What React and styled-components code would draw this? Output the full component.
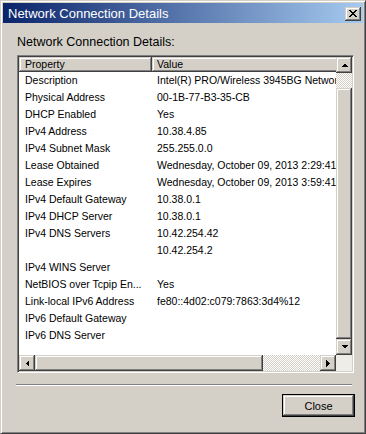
import styled, { createGlobalStyle } from "styled-components";

const GlobalStyle = createGlobalStyle`
  html, body {
    margin: 0;
    padding: 0;
    background: #d4d0c8;
  }
  body {
    font-family: "Liberation Sans", Arial, sans-serif;
    color: #000;
  }
`;

const raised = `
  background: #d4d0c8;
  box-shadow: inset -1px -1px #404040, inset 1px 1px #d4d0c8,
    inset -2px -2px #808080, inset 2px 2px #fff;
`;

const checker = `
  background: repeating-conic-gradient(#d4d0c8 0% 25%, #fff 0% 50%) 0 0 / 2px 2px;
`;

const Window = styled.div`
  width: 366px;
  height: 434px;
  box-sizing: border-box;
  background: #d4d0c8;
  border: 1px solid;
  border-color: #d4d0c8 #404040 #404040 #d4d0c8;
  box-shadow: inset 1px 1px #fff, inset -1px -1px #808080;
  padding: 2px;
  display: flex;
  flex-direction: column;
`;

const TitleBar = styled.div`
  height: 20px;
  flex-shrink: 0;
  display: flex;
  align-items: center;
  justify-content: space-between;
  padding: 0 2px 0 5px;
  background: linear-gradient(to right, #0a246a, #a6caf0);
`;

const Title = styled.span`
  color: #fff;
  font-size: 13px;
  white-space: nowrap;
`;

const TitleButton = styled.div`
  width: 16px;
  height: 14px;
  margin-top: 1px;
  display: flex;
  align-items: center;
  justify-content: center;
  ${raised}
`;

const Body = styled.div`
  flex: 1;
  display: flex;
  flex-direction: column;
  padding: 12px 8px 0 14px;
`;

const Label = styled.div`
  font-size: 12.5px;
  line-height: 15px;
  margin-bottom: 5px;
`;

const ListBox = styled.div`
  height: 318px;
  margin-right: 1px;
  box-sizing: border-box;
  border: 1px solid;
  border-color: #808080 #fff #fff #808080;
  box-shadow: inset 1px 1px #404040, inset -1px -1px #d4d0c8;
  padding: 1px;
  background: #fff;
  display: grid;
  grid-template-columns: 1fr 16px;
  grid-template-rows: 1fr 16px;
`;

const Content = styled.div`
  overflow: hidden;
  min-width: 0;
  font-size: 10.5px;
`;

const Header = styled.div`
  display: flex;
  height: 15px;
`;

const HeaderCell = styled.div`
  flex: 0 0 ${(p) => p.$width}px;
  box-sizing: border-box;
  padding-left: ${(p) => p.$pad}px;
  line-height: 15px;
  white-space: nowrap;
  ${raised}
`;

const Row = styled.div`
  display: flex;
  height: 17px;
  line-height: 17px;
`;

const Cell = styled.div`
  flex: 0 0 ${(p) => p.$width}px;
  box-sizing: border-box;
  padding-left: ${(p) => p.$pad}px;
  white-space: nowrap;
  overflow: hidden;
`;

const VScroll = styled.div`
  display: flex;
  flex-direction: column;
`;

const HScroll = styled.div`
  display: flex;
`;

const ArrowButton = styled.div`
  flex: 0 0 16px;
  width: 16px;
  height: 16px;
  display: flex;
  align-items: center;
  justify-content: center;
  ${raised}
`;

const Track = styled.div`
  flex: 0 0 ${(p) => p.$size}px;
  ${checker}
`;

const Thumb = styled.div`
  flex: ${(p) => (p.$size ? `0 0 ${p.$size}px` : "1")};
  ${raised}
`;

const Corner = styled.div`
  background: #eeede8;
`;

const Separator = styled.div`
  margin: 11px 3px 0 -1px;
  border-top: 1px solid #808080;
  border-bottom: 1px solid #fff;
`;

const ButtonRow = styled.div`
  display: flex;
  justify-content: flex-end;
  margin-top: 8px;
`;

const PushButton = styled.button`
  width: 73px;
  height: 23px;
  box-sizing: border-box;
  border: 1px solid #000;
  padding: 0;
  font-family: "Liberation Sans", Arial, sans-serif;
  font-size: 11px;
  color: #000;
  ${raised}
`;

const Arrow = ({ dir }) => {
  const pts = {
    up: "0,4 7,4 3.5,0.5",
    down: "0,0 7,0 3.5,3.5",
    left: "4,0 4,7 0.5,3.5",
    right: "0,0 0,7 3.5,3.5",
  }[dir];
  const vertical = dir === "up" || dir === "down";
  return (
    <svg width={vertical ? 7 : 4} height={vertical ? 4 : 7} shapeRendering="crispEdges">
      <polygon points={pts} fill="#000" />
    </svg>
  );
};

const CloseGlyph = () => (
  <svg width="8" height="7" viewBox="0 0 8 7" shapeRendering="crispEdges">
    <path
      d="M0 0h2v1h-2zM6 0h2v1h-2zM1 1h2v1h-2zM5 1h2v1h-2zM2 2h4v1h-4zM3 3h2v1h-2zM2 4h4v1h-4zM1 5h2v1h-2zM5 5h2v1h-2zM0 6h2v1h-2zM6 6h2v1h-2z"
      fill="#000"
    />
  </svg>
);

const details = [
  ["Description", "Intel(R) PRO/Wireless 3945BG Network Connection"],
  ["Physical Address", "00-1B-77-B3-35-CB"],
  ["DHCP Enabled", "Yes"],
  ["IPv4 Address", "10.38.4.85"],
  ["IPv4 Subnet Mask", "255.255.0.0"],
  ["Lease Obtained", "Wednesday, October 09, 2013 2:29:41 PM"],
  ["Lease Expires", "Wednesday, October 09, 2013 3:59:41 PM"],
  ["IPv4 Default Gateway", "10.38.0.1"],
  ["IPv4 DHCP Server", "10.38.0.1"],
  ["IPv4 DNS Servers", "10.42.254.42"],
  ["", "10.42.254.2"],
  ["IPv4 WINS Server", ""],
  ["NetBIOS over Tcpip En...", "Yes"],
  ["Link-local IPv6 Address", "fe80::4d02:c079:7863:3d4%12"],
  ["IPv6 Default Gateway", ""],
  ["IPv6 DNS Server", ""],
];

const App = () => {
  return (
    <>
      <GlobalStyle />
      <Window>
        <TitleBar>
          <Title>Network Connection Details</Title>
          <TitleButton>
            <CloseGlyph />
          </TitleButton>
        </TitleBar>
        <Body>
          <Label>Network Connection Details:</Label>
          <ListBox>
            <Content>
              <Header>
                <HeaderCell $width={133} $pad={6}>Property</HeaderCell>
                <HeaderCell $width={260} $pad={5}>Value</HeaderCell>
              </Header>
              {details.map(([prop, value], i) => (
                <Row key={i}>
                  <Cell $width={133} $pad={6}>{prop}</Cell>
                  <Cell $width={260} $pad={5}>{value}</Cell>
                </Row>
              ))}
            </Content>
            <VScroll>
              <ArrowButton>
                <Arrow dir="up" />
              </ArrowButton>
              <Track $size={15} />
              <Thumb />
              <ArrowButton>
                <Arrow dir="down" />
              </ArrowButton>
            </VScroll>
            <HScroll>
              <ArrowButton>
                <Arrow dir="left" />
              </ArrowButton>
              <Thumb $size={228} />
              <Track $size={0} style={{ flex: 1 }} />
              <ArrowButton>
                <Arrow dir="right" />
              </ArrowButton>
            </HScroll>
            <Corner />
          </ListBox>
          <Separator />
          <ButtonRow>
            <PushButton>Close</PushButton>
          </ButtonRow>
        </Body>
      </Window>
    </>
  );
};

export default App;
